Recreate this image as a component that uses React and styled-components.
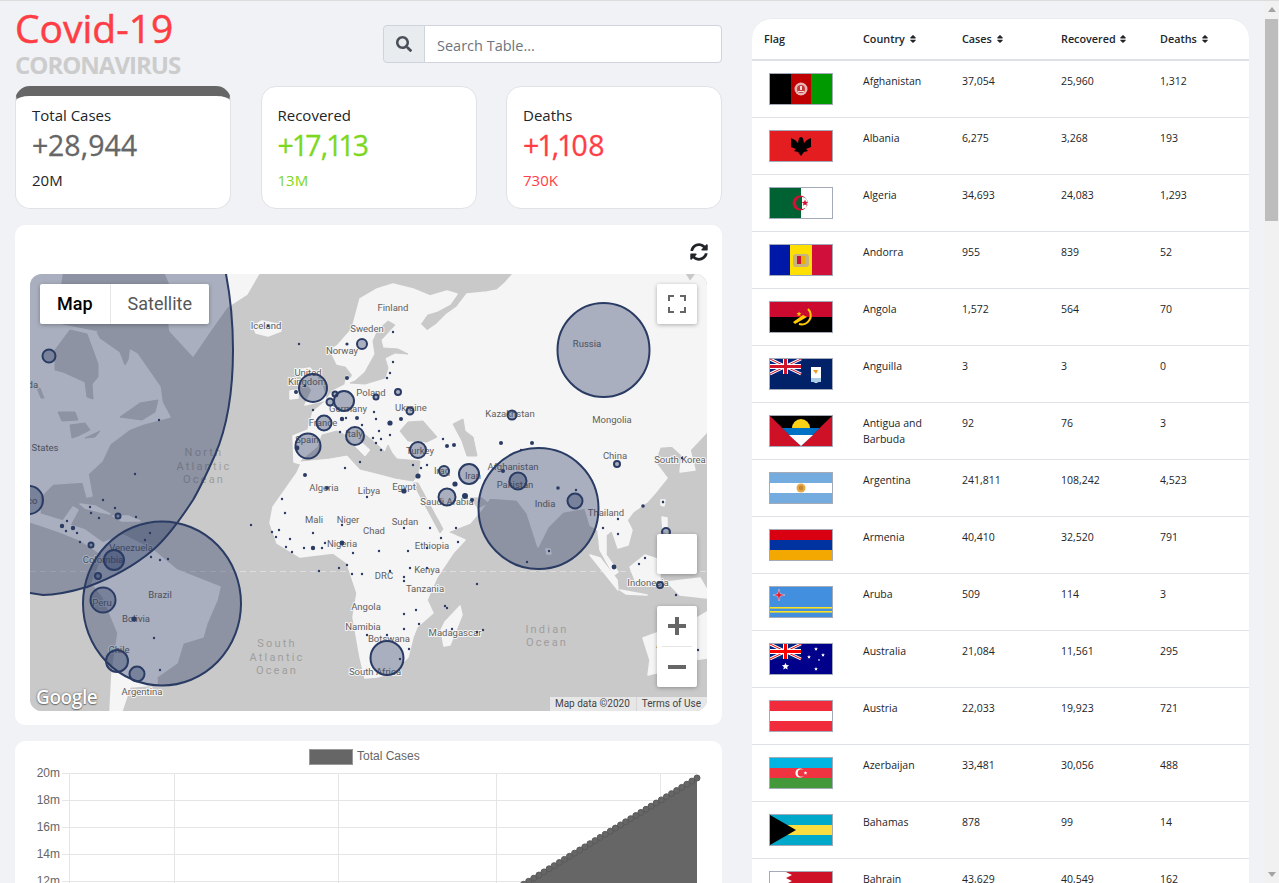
import React from "react";
import styled, { createGlobalStyle } from "styled-components";
import { FaSearch, FaSort, FaSyncAlt } from "react-icons/fa";

const GlobalStyle = createGlobalStyle`
  html, body { margin: 0; padding: 0; height: 100%; overflow: hidden; }
  body {
    background: #f0f2f6;
    color: #212529;
    font-family: "Open Sans", Roboto, Arial, sans-serif;
    border-top: 1px solid #dcdcdc;
    box-sizing: border-box;
  }
  * { box-sizing: border-box; }
`
const Shell = styled.div`
  display: flex;
  height: 882px;
  overflow: hidden;
`
const Page = styled.div`
  flex: 1;
  min-width: 0;
  display: flex;
  align-items: flex-start;
  overflow: hidden;
`
const ScrollTrack = styled.div`
  flex: none;
  width: 15px;
  display: flex;
  flex-direction: column;
  align-items: center;
  padding-top: 6px;
  background: #f1f1f1;
`
const ScrollArrow = styled.div`
  width: 0;
  height: 0;
  border-left: 4px solid transparent;
  border-right: 4px solid transparent;
  border-bottom: ${(p) => (p.$down ? "0" : "5px solid #a3a3a3")};
  border-top: ${(p) => (p.$down ? "5px solid #a3a3a3" : "0")};
  margin-top: ${(p) => (p.$down ? "auto" : "0")};
  margin-bottom: ${(p) => (p.$down ? "6px" : "0")};
`
const ScrollThumb = styled.div`
  width: 13px;
  height: 202px;
  margin-top: 7px;
  background: #bdbdbd;
`
const LeftCol = styled.div`
  flex: none;
  width: 737px;
  padding: 5px 15px 0;
`
const RightCol = styled.div`
  flex: none;
  width: 527px;
  padding: 17px 15px 0;
`
const Header = styled.div`
  display: flex;
  justify-content: space-between;
  align-items: flex-start;
  height: 80px;
`
const Title = styled.h1`
  margin: 0;
  font-size: 39px;
  line-height: 44px;
  font-weight: 400;
  -webkit-text-stroke: 0.5px #ff3d44;
  color: #ff3d44;
`
const Subtitle = styled.h2`
  margin: 0;
  font-size: 24px;
  line-height: 29px;
  font-weight: 700;
  letter-spacing: -1px;
  color: #cccccc;
`
const SearchGroup = styled.div`
  display: flex;
  width: 339px;
  height: 38px;
  margin-top: 19px;
`
const SearchAddon = styled.div`
  width: 42px;
  display: flex;
  align-items: center;
  justify-content: center;
  font-size: 16px;
  color: #495057;
  background: #e9ecef;
  border: 1px solid #ced4da;
  border-radius: 4px 0 0 4px;
`
const SearchInput = styled.input`
  flex: 1;
  min-width: 0;
  margin-left: -1px;
  padding: 7px 12px 5px;
  font: 400 14.5px "Open Sans", Roboto, sans-serif;
  background: #fff;
  border: 1px solid #ced4da;
  border-radius: 0 4px 4px 0;
  &::placeholder { color: #6c757d; opacity: 1; }
`
const Stats = styled.div`
  display: flex;
  justify-content: space-between;
`
const StatCard = styled.div`
  width: 216px;
  height: 123px;
  padding: 17px 16px 0;
  background: #fff;
  border: 1px solid #e0e2e6;
  border-top: ${(p) => (p.$band ? `10px solid ${p.$band}` : "1px solid #e0e2e6")};
  padding-top: ${(p) => (p.$band ? "8px" : "17px")};
  border-radius: 15px;
`
const StatLabel = styled.div`
  font-size: 15px;
  line-height: 22px;
  color: #212529;
`
const StatValue = styled.div`
  margin-top: 1px;
  font-size: 28.5px;
  line-height: 36px;
  font-variant-numeric: proportional-nums;
  -webkit-text-stroke: 0.3px ${(p) => p.$color};
  color: ${(p) => p.$color};
`
const StatTotal = styled.div`
  margin-top: 6px;
  font-size: 15px;
  line-height: 22px;
  color: ${(p) => p.$color};
`
const MapCard = styled.section`
  position: relative;
  margin-top: 16px;
  padding: 49px 15px 14px;
  background: #fff;
  border-radius: 10px;
`
const RefreshButton = styled.div`
  position: absolute;
  top: 18px;
  right: 14px;
  font-size: 18px;
  line-height: 18px;
  color: #212529;
`
const MapFrame = styled.div`
  position: relative;
  height: 437px;
  overflow: hidden;
  border-radius: 12px;
  background: #c9c9c9;
  font-family: Roboto, Arial, sans-serif;
`
const MapDrawing = styled.svg`
  display: block;
  width: 677px;
  height: 437px;
`
const MapType = styled.div`
  position: absolute;
  top: 10px;
  left: 10px;
  display: flex;
  height: 40px;
  background: #fff;
  border-radius: 2px;
  box-shadow: 0 1px 4px rgba(0, 0, 0, 0.3);
  font-size: 18px;
  line-height: 40px;
`
const MapTypeItem = styled.div`
  padding: 0 17px;
  color: ${(p) => (p.$active ? "#000" : "#565656")};
  font-weight: ${(p) => (p.$active ? 500 : 400)};
  & + & { border-left: 1px solid #e6e6e6; }
`
const MapButton = styled.div`
  position: absolute;
  right: 10px;
  top: ${(p) => p.$top}px;
  width: 40px;
  height: 40px;
  display: flex;
  align-items: center;
  justify-content: center;
  background: #fff;
  border-radius: 2px;
  box-shadow: 0 1px 4px rgba(0, 0, 0, 0.3);
`
const ZoomControl = styled.div`
  position: absolute;
  right: 10px;
  top: 332px;
  width: 40px;
  height: 81px;
  background: #fff;
  border-radius: 2px;
  box-shadow: 0 1px 4px rgba(0, 0, 0, 0.3);
`
const ZoomButton = styled.div`
  height: 40px;
  display: flex;
  align-items: center;
  justify-content: center;
`
const ZoomDivider = styled.div`
  height: 1px;
  margin: 0 5px;
  background: #e6e6e6;
`
const GoogleMark = styled.div`
  position: absolute;
  left: 6px;
  bottom: 1px;
  font-family: "Open Sans", Roboto, sans-serif;
  font-size: 19px;
  line-height: 26px;
  font-weight: 600;
  letter-spacing: -0.4px;
  color: #fff;
  text-shadow: 0 0 2px rgba(0, 0, 0, 0.55), 0 1px 1px rgba(0, 0, 0, 0.35);
`
const Attribution = styled.div`
  position: absolute;
  right: 0;
  bottom: 0;
  display: flex;
  height: 14px;
  font-size: 10px;
  line-height: 14px;
  color: #444;
  background: rgba(255, 255, 255, 0.55);
`
const AttributionItem = styled.span`
  padding: 0 6px 0 5px;
  & + & { border-left: 1px solid #d6d6d6; }
`
const ChartCard = styled.section`
  margin-top: 16px;
  background: #fff;
  border-radius: 10px;
  overflow: hidden;
`
const ChartDrawing = styled.svg`
  display: block;
  width: 707px;
  height: 440px;
`
const TableCard = styled.div`
  background: #fff;
  border-top: 1px solid #e9ecef;
  border-radius: 20px 20px 0 0;
  overflow: hidden;
`
const Table = styled.table`
  width: 100%;
  table-layout: fixed;
  border-collapse: collapse;
  font-size: 10.5px;
  line-height: 16px;
  color: #212529;
`
const Th = styled.th`
  width: 99px;
  padding: 12px;
  text-align: left;
  font-size: 10.8px;
  font-weight: 600;
  white-space: nowrap;
  border-bottom: 2px solid #dee2e6;
  svg { font-size: 10px; margin-left: 0; vertical-align: -1px; }
`
const LastTh = styled(Th)`
  width: auto;
`
const Td = styled.td`
  height: 57px;
  padding: 12px;
  vertical-align: top;
  border-bottom: 1px solid #dee2e6;
`
const FlagBox = styled.svg`
  display: block;
  width: 64px;
  height: 32px;
  margin-left: 5px;
  border: 1px solid #a3aab8;
`

// flags, all drawn on a 62x30 field
const UnionJack = ({ red = "#cf142b" }) => (
  <g>
    <rect width="31" height="15" fill="#00247d" />
    <path d="M0 0L31 15M31 0L0 15" stroke="#fff" strokeWidth="3" />
    <path d="M0 0L31 15M31 0L0 15" stroke={red} strokeWidth="1" />
    <path d="M15.5 0V15M0 7.5H31" stroke="#fff" strokeWidth="5" />
    <path d="M15.5 0V15M0 7.5H31" stroke={red} strokeWidth="3" />
  </g>
)
const Star = ({ x, y, r = 2, fill = "#fff" }) => {
  const pts = []
  for (let i = 0; i < 10; i++) {
    const rad = i % 2 ? r * 0.45 : r
    const a = (i * Math.PI) / 5 - Math.PI / 2
    pts.push(`${x + rad * Math.cos(a)},${y + rad * Math.sin(a)}`)
  }
  return <polygon points={pts.join(" ")} fill={fill} />
}
const Afghanistan = () => (
  <>
    <rect width="21" height="30" fill="#000" />
    <rect x="21" width="20" height="30" fill="#be0000" />
    <rect x="41" width="21" height="30" fill="#009900" />
    <circle cx="31" cy="15" r="6.5" fill="#e9b4b4" />
    <circle cx="31" cy="15" r="4" fill="#c43a3a" />
    <path d="M28 17H34V18H28ZM30 12H32V16H30Z" fill="#f3dada" />
  </>
)
const Albania = () => (
  <>
    <rect width="62" height="30" fill="#e41e20" />
    <path d="M31 25L28 21L24 20L26 18L21 16L21 7L25 9L28 12L29 7L31 6L33 7L34 12L37 9L41 7L41 16L36 18L38 20L34 21Z" fill="#000" />
  </>
)
const Algeria = () => (
  <>
    <rect width="31" height="30" fill="#006233" />
    <rect x="31" width="31" height="30" fill="#fff" />
    <circle cx="30" cy="15" r="7.5" fill="#d21034" />
    <circle cx="32" cy="15" r="6" fill="#006233" />
    <path d="M32 9A6 6 0 0 1 32 21Z" fill="#fff" />
    <Star x={35} y={15} r={3.5} fill="#d21034" />
  </>
)
const Andorra = () => (
  <>
    <rect width="20" height="30" fill="#0018a8" />
    <rect x="20" width="22" height="30" fill="#fedf00" />
    <rect x="42" width="20" height="30" fill="#d0103a" />
    <rect x="23" y="9" width="16" height="13" rx="3" fill="#c7b37f" />
    <rect x="27" y="11" width="4" height="8" fill="#d0103a" />
    <rect x="31" y="11" width="4" height="8" fill="#e8b000" />
  </>
)
const Angola = () => (
  <>
    <rect width="62" height="15" fill="#cc092f" />
    <rect y="15" width="62" height="15" fill="#000" />
    <path d="M38 7A9 9 0 0 1 29 22" fill="none" stroke="#ffcb00" strokeWidth="2.2" />
    <path d="M25 22L37 15L33 13L23 20Z" fill="#ffcb00" />
    <Star x={29} y={12} r={2.6} fill="#ffcb00" />
  </>
)
const Anguilla = () => (
  <>
    <rect width="62" height="30" fill="#012169" />
    <UnionJack />
    <path d="M41 8H51V19Q51 23 46 24Q41 23 41 19Z" fill="#fff" />
    <path d="M43 11L48 11L46 15Z" fill="#ee9a20" />
    <rect x="41" y="19" width="10" height="4" fill="#a9cde8" />
  </>
)
const Antigua = () => (
  <>
    <rect width="62" height="30" fill="#ce1126" />
    <path d="M0 0H62L31 30Z" fill="#000" />
    <path d="M12 12H50L31 30Z" fill="#0072c6" />
    <path d="M19 19H43L31 30Z" fill="#fff" />
    <path d="M22 12A9 9 0 0 1 40 12Z" fill="#fcd116" />
  </>
)
const Argentina = () => (
  <>
    <rect width="62" height="30" fill="#74acdf" />
    <rect y="10" width="62" height="10" fill="#fff" />
    <circle cx="31" cy="15" r="4.5" fill="#e8a94a" />
    <circle cx="31" cy="15" r="2.4" fill="#c9882f" />
  </>
)
const Armenia = () => (
  <>
    <rect width="62" height="10" fill="#d90012" />
    <rect y="10" width="62" height="10" fill="#0033a0" />
    <rect y="20" width="62" height="10" fill="#f2a800" />
  </>
)
const Aruba = () => (
  <>
    <rect width="62" height="30" fill="#418fde" />
    <rect y="20" width="62" height="1.6" fill="#fbe122" />
    <rect y="24" width="62" height="1.6" fill="#fbe122" />
    <path d="M9 2L10.2 6.8L15 8L10.2 9.2L9 14L7.8 9.2L3 8L7.8 6.8Z" fill="#e8112d" stroke="#fff" strokeWidth="0.4" />
  </>
)
const Australia = () => (
  <>
    <rect width="62" height="30" fill="#00008b" />
    <UnionJack red="#ff0000" />
    <Star x={15.5} y={22.5} r={3.8} />
    <Star x={46} y={5} r={2} />
    <Star x={39} y={13} r={2} />
    <Star x={53} y={11} r={2} />
    <Star x={49} y={16} r={1.2} />
    <Star x={46} y={25} r={2} />
  </>
)
const Austria = () => (
  <>
    <rect width="62" height="30" fill="#ef2b3c" />
    <rect y="10" width="62" height="10" fill="#fff" />
  </>
)
const Azerbaijan = () => (
  <>
    <rect width="62" height="10" fill="#00b5e2" />
    <rect y="10" width="62" height="10" fill="#ef3340" />
    <rect y="20" width="62" height="10" fill="#43983a" />
    <circle cx="30" cy="15" r="4.6" fill="#fff" />
    <circle cx="31.5" cy="15" r="3.8" fill="#ef3340" />
    <Star x={35.5} y={15} r={2} />
  </>
)
const Bahamas = () => (
  <>
    <rect width="62" height="30" fill="#00a9c9" />
    <rect y="10" width="62" height="10" fill="#fcdd3f" />
    <path d="M0 0L26 15L0 30Z" fill="#000" />
  </>
)
const Bahrain = () => (
  <>
    <rect width="62" height="30" fill="#ce1126" />
    <path d="M0 0H16L22 3L16 6L22 9L16 12L22 15L16 18L22 21L16 24L22 27L16 30H0Z" fill="#fff" />
  </>
)

const COUNTRIES = [
  ["Afghanistan", "37,054", "25,960", "1,312", Afghanistan],
  ["Albania", "6,275", "3,268", "193", Albania],
  ["Algeria", "34,693", "24,083", "1,293", Algeria],
  ["Andorra", "955", "839", "52", Andorra],
  ["Angola", "1,572", "564", "70", Angola],
  ["Anguilla", "3", "3", "0", Anguilla],
  ["Antigua and Barbuda", "92", "76", "3", Antigua],
  ["Argentina", "241,811", "108,242", "4,523", Argentina],
  ["Armenia", "40,410", "32,520", "791", Armenia],
  ["Aruba", "509", "114", "3", Aruba],
  ["Australia", "21,084", "11,561", "295", Australia],
  ["Austria", "22,033", "19,923", "721", Austria],
  ["Azerbaijan", "33,481", "30,056", "488", Azerbaijan],
  ["Bahamas", "878", "99", "14", Bahamas],
  ["Bahrain", "43,629", "40,549", "162", Bahrain],
]

// map shapes, in page coordinates (viewBox starts at the map's corner)
const LAND = [
  // north and central america
  "M20 274L62 274L58 300L62 325L97 332L137 354L160 387L162 402L170 417L143 424L130 429L110 444L102 461L88 474L92 496L87 497L83 482L53 484L40 497L40 514L63 521L73 507L78 510L70 525L85 530L103 543L100 553L80 540L60 532L40 525L30 522L20 520Z",
  "M80 504L95 506L110 514L100 512L85 508Z",
  "M113 516L128 516L140 521L122 521Z",
  // greenland
  "M163 268L262 268L247 294L227 307L210 331L193 356L170 331L167 311L173 291Z",
  // south america
  "M103 543L123 535L153 550L177 570L220 587L217 600L207 623L203 637L183 643L177 663L157 677L157 685L130 687L122 711L110 711L112 673L118 633L103 597L92 583L100 563Z",
  // afro-eurasia
  "M360 299L377 289L393 284L413 289L430 296L447 291L457 294L450 304L437 311L427 314L420 324L427 331L437 324L447 314L457 307L467 294L487 292L497 290L505 283L513 274L685 274L690 282L696 274L720 268L720 432L707 432L690 450L695 470L680 472L682 455L672 446L660 447L655 462L667 478L655 493L647 502L633 512L627 520L632 530L628 545L618 548L612 530L606 535L606 555L618 572L614 575L600 550L598 530L590 525L585 508L563 512L548 527L538 547L527 513L517 500L490 498L481 510L470 523L447 532L465 540L453 553L437 577L427 600L433 613L417 627L413 637L408 657L393 673L377 677L365 678L360 657L353 617L357 593L347 563L333 553L300 557L277 543L270 523L273 507L297 473L301 464L294 462L293 436L308 430L313 412L325 402L333 391L345 385L347 376L350 380L353 375L346 366L337 364L330 350L337 346L352 329Z",
  "M460 606L462 615L450 645L444 646L441 630L445 622Z",
  "M296 370L310 368L322 385L326 400L305 405L312 390Z",
  "M290 391L298 390L298 398L290 399Z",
  "M253 326L262 321L278 324L281 331L268 336L256 333Z",
  "M590 555L600 558L617 580L618 590L610 580Z",
  "M630 567L645 555L660 560L660 585L635 580Z",
  "M620 590L647 595L626 594Z",
  "M662 517L667 518L667 533L663 530Z",
  "M661 500L665 500L664 506L661 505Z",
  "M546 549L550 549L551 554L547 554Z",
  "M667 582L700 578L707 590L707 598L680 595Z",
  "M707 612L697 618L690 625L675 625L665 630L643 638L650 660L648 675L660 672L680 662L707 658Z",
]
const SEAS = [
  // mediterranean
  "M301 461L318 447L322 435L337 431L345 435L352 444L365 457L371 450L360 440L355 432L362 432L373 441L385 452L388 445L392 453L397 459L420 461L418 475L413 481L395 478L380 474L360 469L347 455L330 458L310 460Z",
  // baltic
  "M388 321L378 330L373 341L375 354L365 372L355 381L350 383L365 384L385 378L388 368L385 358L395 353L408 354L398 349L383 348L381 340L395 325Z",
  "M400 431L408 422L423 421L437 437L427 442L408 441Z",
  "M453 424L463 419L465 431L473 437L477 456L467 456L462 441Z",
  "M413 483L418 483L443 529L440 533Z",
  "M470 498L482 498L488 503L478 508Z",
  // hudson bay and the st lawrence
  "M55 350L70 330L87 334L98 364L98 377L92 384L93 399L87 397L85 382L63 372L55 370Z",
  "M97 332L115 335L130 345L128 360L125 365L120 352L100 338Z",
  "M120 417L140 403L158 400L155 412L142 420Z",
  "M58 412L75 412L78 420L62 421Z",
  "M70 425L85 423L90 430L78 436L72 438Z",
  "M85 438L100 431L95 437Z",
  "M37 388L40 388L44 398L41 398Z",
]
const LABELS = [
  ["Finland", 393, 308], ["Sweden", 367, 329], ["Norway", 342, 351], ["Iceland", 266, 326],
  ["United", 308, 373], ["Kingdom", 307, 382], ["Poland", 371, 393], ["Germany", 348, 409],
  ["France", 323, 423], ["Spain", 307, 440], ["Italy", 354, 434], ["Ukraine", 411, 408],
  ["Kazakhstan", 510, 414], ["Mongolia", 612, 420], ["Russia", 587, 344], ["China", 615, 456],
  ["South Korea", 680, 460], ["Turkey", 420, 451], ["Iraq", 442, 471], ["Iran", 473, 476],
  ["Afghanistan", 513, 467], ["Pakistan", 515, 485], ["Saudi Arabia", 447, 502], ["Egypt", 404, 487],
  ["Libya", 369, 491], ["Algeria", 324, 488], ["India", 545, 504], ["Thailand", 606, 513],
  ["Mali", 314, 520], ["Niger", 348, 520], ["Chad", 374, 531], ["Sudan", 405, 522],
  ["Ethiopia", 432, 546], ["Nigeria", 342, 544], ["Kenya", 427, 570], ["DRC", 384, 576],
  ["Tanzania", 425, 589], ["Indonesia", 648, 583], ["Angola", 366, 607], ["Namibia", 363, 627],
  ["Botswana", 389, 639], ["Madagascar", 455, 633], ["South Africa", 375, 672], ["Brazil", 160, 595],
  ["Bolivia", 136, 619], ["Peru", 102, 603], ["Venezuela", 131, 548], ["Colombia", 103, 560],
  ["Chile", 119, 650], ["Argentina", 142, 692], ["States", 45, 448], ["Canada", 22, 385],
  ["Mexico", 22, 501], ["Australia", 675, 645],
]
const OCEANS = [
  ["North", 204, 456], ["Atlantic", 204, 470], ["Ocean", 204, 483],
  ["South", 277, 647], ["Atlantic", 277, 661], ["Ocean", 277, 674],
  ["Indian", 547, 633], ["Ocean", 547, 646],
]
const RINGS = [
  [603.5, 350, 46, 47], [538.5, 508.5, 60, 60.5], [162, 603.5, 79, 82], [387, 658, 16.5, 17],
  [313, 388, 14, 14], [308, 446, 12.5, 12.5], [344, 401, 10, 10], [324, 423, 7.5, 7.5],
  [355, 436, 9, 9], [418, 450, 8, 8], [469, 474, 10, 10], [444, 471, 5, 5], [518, 481, 8.5, 8.5],
  [447, 497, 8.5, 8.5], [575, 501, 7.5, 7.5], [103, 600, 12.5, 12.5], [114, 560, 10, 10],
  [117, 661, 11, 11], [137, 674, 7.5, 7.5], [29, 500, 14, 14], [49, 356, 6.5, 6.5], [362, 344, 5, 5],
  [512, 415, 4.5, 4.5], [410, 411, 3.5, 3.5], [398, 392, 3, 3], [376, 397, 2.5, 2.5], [330, 402, 3.5, 3.5],
  [335, 394, 2.5, 2.5], [617, 464, 3, 3], [660, 585, 3, 3], [666, 532, 4, 4], [98, 576, 3, 3],
  [118, 516, 2.5, 2.5], [91, 545, 2.5, 2.5],
]
const DOTS = [
  [299,344],[347,344,1.6],[347,378,2],[296,392,2],[313,410],[342,419,2.2],[357,418,2],[346,418],[362,425],[340,432],
  [360,462],[345,468],[305,475,2],[297,448,2.4],[327,488,2],[367,497],[282,499],[268,326],[159,420],[135,474],
  [103,500],[305,386],[91,513],[115,508],[99,518],[90,507],[62,526,2.2],[73,528,2.2],[67,521],[66,531],[77,533],
  [80,542],[136,517],[145,540],[150,533],[151,557],[160,560],[168,559],[134,619,2.6],[154,638],[160,670],[251,525],
  [285,513],[279,530],[272,532],[276,537],[290,539],[313,533],[342,525],[342,543,2.4],[313,548,2.2],[304,548],[286,547],
  [292,552],[325,543],[322,548],[353,553],[347,565],[339,568],[319,571],[352,574],[362,574],[367,635],[404,528],
  [430,528],[456,528],[441,538],[458,542],[427,548],[408,551],[379,551],[390,571],[410,568],[427,568],[404,577],
  [404,581],[477,584],[445,606],[447,608],[416,610],[404,614],[419,624],[404,629],[452,629],[483,630],[477,632],
  [409,649],[400,659],[387,635],[614,567,2.4],[639,564],[645,558],[603,528],[618,534],[618,519],[643,506,1.8],[663,502],
  [527,562],[549,551],[676,595],[698,650],[393,332],[393,362],[390,373],[387,378],[374,412],[376,419],[401,419,2],
  [390,423,2.6],[379,431],[390,435],[376,443],[381,439],[381,450],[373,438],[447,446,2],[454,445,2],[501,443,2],
  [532,443,2],[521,450],[443,439],[413,465],[427,465],[421,468],[418,476,2.6],[404,491,2.6],[455,484,2.6],[465,496,3],
  [472,500,2],[503,471,2],[558,488,1.8],[576,490],[682,458],[663,502],
]
const RING_FILL = "rgba(39, 55, 95, 0.37)"
const RING_LINE = "#2a3b64"

const WorldMap = () => (
  <MapDrawing viewBox="30 274 677 437">
    <rect x="30" y="274" width="677" height="437" fill="#c9c9c9" />
    <path d="M30 571.5H707" stroke="#dedede" strokeWidth="1" strokeDasharray="6 4" />
    {LAND.map((d, i) => <path key={i} d={d} fill="#f5f5f5" stroke="#f5f5f5" strokeWidth="1.5" strokeLinejoin="round" />)}
    {SEAS.map((d, i) => <path key={i} d={d} fill="#c9c9c9" stroke="#c9c9c9" strokeWidth="1" strokeLinejoin="round" />)}
    {OCEANS.map(([t, x, y], i) => (
      <text key={i} x={x} y={y} textAnchor="middle" fontSize="11" letterSpacing="2.2" fill="#9e9e9e">{t}</text>
    ))}
    {LABELS.map(([t, x, y]) => (
      <text key={t} x={x} y={y + 3} textAnchor="middle" fontSize="9.5" fill="#616161" stroke="#f5f5f5"
        strokeWidth="2" paintOrder="stroke" strokeLinejoin="round">{t}</text>
    ))}
    <path d="M222 262L226 274C231 300 233 325 233 350C233 385 228 425 215 455C207 473 200 488 193 500C180 520 168 537 153 550C140 561 120 575 87 587C70 592 55 595 43 595L30 593L10 590V262Z"
      fill={RING_FILL} stroke={RING_LINE} strokeWidth="2" />
    {RINGS.map(([x, y, rx, ry], i) => (
      <ellipse key={i} cx={x} cy={y} rx={rx} ry={ry} fill={RING_FILL} stroke={RING_LINE} strokeWidth="2" />
    ))}
    {DOTS.map(([x, y, r = 1.2], i) => <circle key={i} cx={x} cy={y} r={r} fill={RING_LINE} />)}
  </MapDrawing>
)

const FullscreenIcon = () => (
  <svg width="18" height="18" viewBox="0 0 18 18" fill="#666">
    <path d="M0 0H6V2H2V6H0ZM12 0H18V6H16V2H12ZM0 12H2V16H6V18H0ZM16 12H18V18H12V16H16Z" />
  </svg>
)
const PlusIcon = () => (
  <svg width="18" height="18" viewBox="0 0 18 18" fill="#666">
    <path d="M7 0H11V7H18V11H11V18H7V11H0V7H7Z" />
  </svg>
)
const MinusIcon = () => (
  <svg width="18" height="18" viewBox="0 0 18 18" fill="#666">
    <path d="M0 7H18V11H0Z" />
  </svg>
)

// chart line: steady climb on the visible part, flatter before it
const chartPoints = () => {
  const pts = []
  for (let x = 697; x > 170; x -= 5.1) {
    const y = x >= 526 ? 883 - ((x - 526) * 105) / 171 : 883 + (526 - x) * 0.55
    pts.push([x, y])
  }
  return pts
}
const GRID_Y = [[773, "20m"], [800, "18m"], [827, "16m"], [854, "14m"], [881, "12m"], [908, "10m"], [935, "8m"], [962, "6m"], [989, "4m"], [1016, "2m"], [1043, "0"]]
const GRID_X = [69.5, 174.5, 338.5, 496.5, 660.5]

const CasesChart = () => {
  const pts = chartPoints()
  const line = pts.map(([x, y]) => `${x},${y}`).join(" ")
  return (
    <ChartDrawing viewBox="15 741 707 440">
      <rect x="309.5" y="749.5" width="43" height="15" fill="#666" stroke="#999" />
      <text x="357" y="760" fontFamily="'Liberation Sans', Arial, sans-serif" fontSize="12" fill="#666">Total Cases</text>
      {GRID_Y.map(([y, t]) => (
        <g key={t}>
          <path d={`M62 ${y + 0.5}H697`} stroke="#e5e5e5" />
          <text x="60" y={y + 4} textAnchor="end" fontFamily="'Liberation Sans', Arial, sans-serif" fontSize="12" fill="#666">{t}</text>
        </g>
      ))}
      {GRID_X.map((x) => <path key={x} d={`M${x} 773V1050`} stroke="#e5e5e5" />)}
      <polygon points={`${line} 170,1043 697,1043`} fill="#666" />
      {pts.map(([x, y], i) => <circle key={i} cx={x} cy={y} r="3" fill="#666" stroke="#5a5a5a" strokeWidth="1" />)}
    </ChartDrawing>
  )
}

const App = () => (
  <>
    <GlobalStyle />
    <Shell>
      <Page>
        <LeftCol>
          <Header>
            <div>
              <Title>Covid-19</Title>
              <Subtitle>CORONAVIRUS</Subtitle>
            </div>
            <SearchGroup>
              <SearchAddon><FaSearch /></SearchAddon>
              <SearchInput type="text" placeholder="Search Table..." />
            </SearchGroup>
          </Header>
          <Stats>
            <StatCard $band="#666666">
              <StatLabel>Total Cases</StatLabel>
              <StatValue $color="#666666">+28,944</StatValue>
              <StatTotal $color="#212529">20M</StatTotal>
            </StatCard>
            <StatCard>
              <StatLabel>Recovered</StatLabel>
              <StatValue $color="#7dd71d">+17,113</StatValue>
              <StatTotal $color="#7dd71d">13M</StatTotal>
            </StatCard>
            <StatCard>
              <StatLabel>Deaths</StatLabel>
              <StatValue $color="#ff3d47">+1,108</StatValue>
              <StatTotal $color="#ff3d47">730K</StatTotal>
            </StatCard>
          </Stats>
          <MapCard>
            <RefreshButton><FaSyncAlt /></RefreshButton>
            <MapFrame>
              <WorldMap />
              <MapType>
                <MapTypeItem $active>Map</MapTypeItem>
                <MapTypeItem>Satellite</MapTypeItem>
              </MapType>
              <MapButton $top={10}><FullscreenIcon /></MapButton>
              <MapButton $top={260} />
              <ZoomControl>
                <ZoomButton><PlusIcon /></ZoomButton>
                <ZoomDivider />
                <ZoomButton><MinusIcon /></ZoomButton>
              </ZoomControl>
              <GoogleMark>Google</GoogleMark>
              <Attribution>
                <AttributionItem>Map data ©2020</AttributionItem>
                <AttributionItem>Terms of Use</AttributionItem>
              </Attribution>
            </MapFrame>
          </MapCard>
          <ChartCard>
            <CasesChart />
          </ChartCard>
        </LeftCol>
        <RightCol>
          <TableCard>
            <Table>
              <thead>
                <tr>
                  <Th>Flag</Th>
                  <Th>Country <FaSort /></Th>
                  <Th>Cases <FaSort /></Th>
                  <Th>Recovered <FaSort /></Th>
                  <LastTh>Deaths <FaSort /></LastTh>
                </tr>
              </thead>
              <tbody>
                {COUNTRIES.map(([name, cases, recovered, deaths, Flag]) => (
                  <tr key={name}>
                    <Td>
                      <FlagBox viewBox="0 0 62 30" preserveAspectRatio="none"><Flag /></FlagBox>
                    </Td>
                    <Td>{name}</Td>
                    <Td>{cases}</Td>
                    <Td>{recovered}</Td>
                    <Td>{deaths}</Td>
                  </tr>
                ))}
              </tbody>
            </Table>
          </TableCard>
        </RightCol>
      </Page>
      <ScrollTrack>
        <ScrollArrow />
        <ScrollThumb />
        <ScrollArrow $down />
      </ScrollTrack>
    </Shell>
  </>
)

export default App
